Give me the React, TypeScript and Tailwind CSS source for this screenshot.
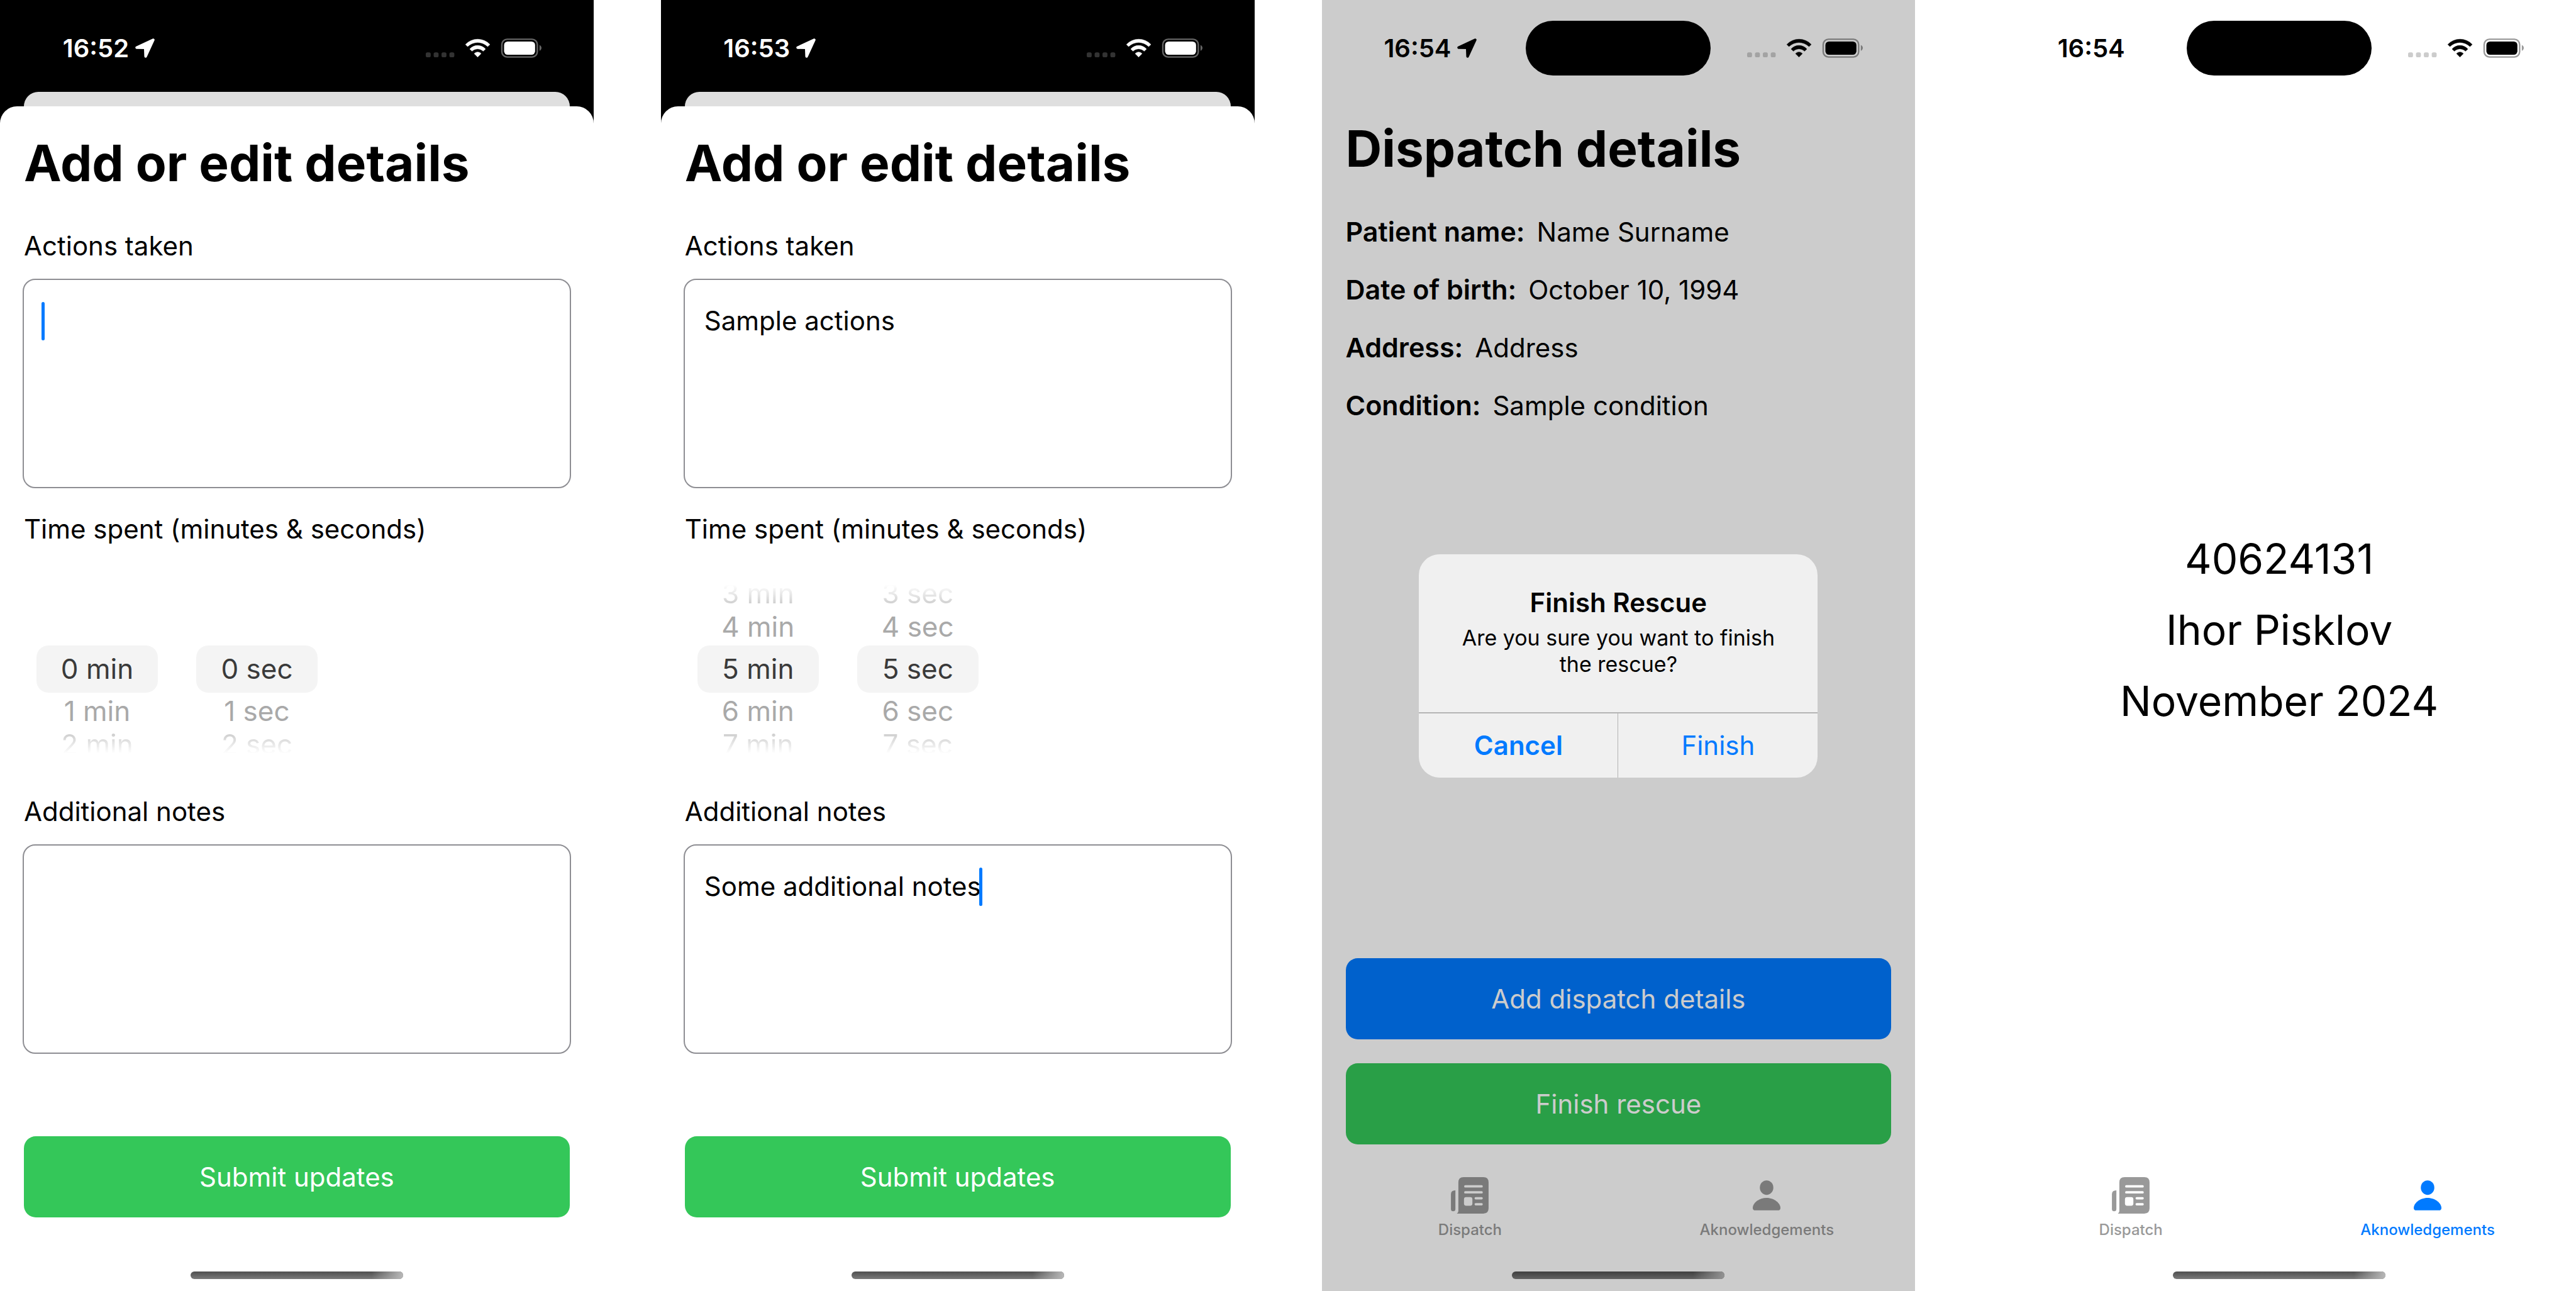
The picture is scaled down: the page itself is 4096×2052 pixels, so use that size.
import React, { useState } from "react";

function StatusGlyphs({ dark }: { dark: boolean }) {
  const ink = dark ? "#fff" : "#000";
  const edge = dark ? "#666" : "#999";
  const faint = dark ? "#333" : "#ccc";
  return (
    <svg viewBox="135 84 705 117" className="h-[31px] w-[184px]" role="img" aria-label="No signal, Wi-Fi on, battery full">
      {[135, 183, 231, 279].map((x) => (
        <rect key={x} x={x} y="168" width="30" height="30" rx="10" fill={faint} />
      ))}
      <g fill={ink} stroke={ink} strokeWidth="2" strokeLinejoin="round">
        <path d="M377 120A103 103 0 0 1 526 120L512 133A87 87 0 0 0 390 133Z" />
        <path d="M403 148A64 64 0 0 1 499 148L485 161A48 48 0 0 0 417 161Z" />
        <path d="M430 176A27 27 0 0 1 472 176L451 197Z" />
      </g>
      <rect x="598.500" y="88.500" width="216" height="108" rx="32" fill="none" stroke={edge} strokeWidth="9" />
      <rect x="612" y="102" width="189" height="81" rx="22" fill={ink} />
      <path d="M828 123C836 127 840 134 840 141S836 156 828 159Z" fill={edge} />
    </svg>
  );
}

function LocationArrow() {
  return (
    <svg viewBox="519 86 118 118" className="size-[31px]" aria-hidden="true">
      <path
        d="M628 95L528 142L580 143L582 195Z"
        fill="currentColor"
        stroke="currentColor"
        strokeWidth="16"
        strokeLinejoin="round"
      />
    </svg>
  );
}

function StatusBar({ time, dark = false, location = true, island = false }: { time: string; dark?: boolean; location?: boolean; island?: boolean }) {
  return (
    <header
      className={`grid h-[146px] shrink-0 grid-cols-[1fr_294px_1fr] items-center pt-[7px] ${dark ? "text-white" : "text-black"}`}
    >
      <div className="flex items-center justify-center gap-[10px] pl-[21px]">
        <span className="text-[40px] leading-[48px] font-semibold">{time}</span>
        {location && <LocationArrow />}
      </div>
      <div className="h-[87px]">{island && <div className="h-full rounded-full bg-black" />}</div>
      <div className="flex justify-center pr-[25px]">
        <StatusGlyphs dark={dark} />
      </div>
    </header>
  );
}

function HomeIndicator() {
  return (
    <div className="mx-auto mt-auto mb-[19px] h-[12px] w-[338px] shrink-0 overflow-hidden rounded-full bg-linear-to-b from-[#4f4f4f] to-[#7b7b7b]">
      <div className="ml-auto h-full w-[50px] bg-linear-to-r from-transparent to-[#b8b8b8]" />
    </div>
  );
}

function Title({ children }: { children: React.ReactNode }) {
  return <h1 className="mb-[57px] text-[80px] leading-[96px] font-bold">{children}</h1>;
}

function WideButton({ tone, children }: { tone: "green" | "blue"; children: React.ReactNode }) {
  return (
    <button
      type="button"
      className={`h-[129px] w-full shrink-0 rounded-[19px] text-[42px] leading-[54px] text-white ${tone === "green" ? "bg-[#34c759]" : "bg-[#007aff]"}`}
    >
      {children}
    </button>
  );
}

function Field({ id, label, initial, caret }: { id: string; label: string; initial: string; caret?: string }) {
  const [value, setValue] = useState(initial);
  return (
    <div className="relative flex flex-col gap-[25px]">
      <label htmlFor={id} className="text-[42px] leading-[54px]">
        {label}
      </label>
      <textarea
        id={id}
        value={value}
        onChange={(e) => setValue(e.target.value)}
        className="-mx-[2px] h-[333px] resize-none rounded-[20px] border-2 border-[#8e8e93] bg-white px-[31px] py-[38px] text-[42px] leading-[54px] outline-none"
      />
      {caret !== undefined && <span aria-hidden="true" className={`absolute top-[116px] h-[61px] w-[5px] rounded-full bg-[#007aff] ${caret}`} />}
    </div>
  );
}

const rowStyles: Record<number, string> = {
  [-2]: "h-[47px] text-[#cfcfcf] [mask-image:linear-gradient(to_top,black_15%,transparent_80%)]",
  [-1]: "h-[59px] text-[#a9a9a9]",
  0: "h-[75px] w-full rounded-[19px] bg-[#f4f4f4] text-[#3a3a3a]",
  1: "h-[59px] text-[#a9a9a9]",
  2: "h-[47px] text-[#cfcfcf] [mask-image:linear-gradient(to_bottom,black_15%,transparent_80%)]",
};

function Wheel({ value, unit, label }: { value: number; unit: string; label: string }) {
  return (
    <ul role="listbox" aria-label={label} className="flex w-[193px] flex-col items-center text-[44px] leading-[54px]">
      {[-2, -1, 0, 1, 2].map((step) => (
        <li
          key={step}
          role="option"
          aria-selected={step === 0}
          className={`flex items-center justify-center whitespace-nowrap ${rowStyles[step]}`}
        >
          {value + step >= 0 ? `${value + step} ${unit}` : ""}
        </li>
      ))}
    </ul>
  );
}

function DetailsForm({ id, time, actions, notes, spent, actionsCaret, notesCaret }: {
  id: string;
  time: string;
  actions: string;
  notes: string;
  spent: number;
  actionsCaret?: string;
  notesCaret?: string;
}) {
  return (
    <section className="flex min-h-screen flex-col bg-black">
      <StatusBar time={time} dark />
      <div className="mx-[38px] h-[23px] shrink-0 rounded-t-[23px] bg-[#dfdfdf]" />
      <form className="flex flex-1 flex-col rounded-t-[27px] bg-white px-[38px] pt-[42px]">
        <Title>Add or edit details</Title>
        <div className="flex flex-col gap-[38px]">
          <Field id={`${id}-actions`} label="Actions taken" initial={actions} caret={actionsCaret} />
          <div className="flex flex-col gap-[25px]">
            <span className="text-[42px] leading-[54px]">Time spent (minutes &amp; seconds)</span>
            <div className="ml-[20px] flex h-[332px] items-center gap-[61px] pt-[8px]">
              <Wheel value={spent} unit="min" label="Minutes" />
              <Wheel value={spent} unit="sec" label="Seconds" />
            </div>
          </div>
          <Field id={`${id}-notes`} label="Additional notes" initial={notes} caret={notesCaret} />
        </div>
        <div className="mt-auto flex h-[246px] flex-col">
          <WideButton tone="green">Submit updates</WideButton>
          <HomeIndicator />
        </div>
      </form>
    </section>
  );
}

function NewspaperIcon() {
  return (
    <svg viewBox="144 97 228 221" className="h-[58px] w-[60px]" aria-hidden="true">
      <path
        fill="currentColor"
        fillRule="evenodd"
        d="M189 129Q189 97 221 97H340Q372 97 372 129V286Q372 318 340 318H180Q189 314 189 302ZM231 146a7 7 0 0 0 0 14H330a7 7 0 0 0 0 -14ZM231 182a7 7 0 0 0 0 14H330a7 7 0 0 0 0 -14ZM236 218Q223 218 223 231V257Q223 270 236 270H261Q274 270 274 257V231Q274 218 261 218ZM294 218a7 7 0 0 0 0 14H330a7 7 0 0 0 0 -14ZM294 254a7 7 0 0 0 0 14H330a7 7 0 0 0 0 -14Z"
      />
      <path fill="currentColor" d="M171 177V290A13.500 13.500 0 0 1 144 290V201Q144 177 171 177Z" />
    </svg>
  );
}

function PersonIcon() {
  return (
    <svg viewBox="0 0 170 184" className="h-[48px] w-[44px]" aria-hidden="true">
      <ellipse cx="85" cy="44.500" rx="41.500" ry="44.500" fill="currentColor" />
      <path fill="currentColor" d="M85 107C135 107 170 142 170 169Q170 184 154 184H16Q0 184 0 169C0 142 35 107 85 107Z" />
    </svg>
  );
}

function TabBar({ active }: { active?: string }) {
  const tabs = [
    { name: "Dispatch", icon: <NewspaperIcon /> },
    { name: "Aknowledgements", icon: <PersonIcon /> },
  ];
  return (
    <nav className="flex h-[195px] shrink-0 flex-col pt-[14px]">
      <div className="grid grid-cols-2">
        {tabs.map((tab) => (
          <button
            key={tab.name}
            type="button"
            className={`flex flex-col items-center gap-[11px] text-[24px] leading-[30px] font-medium ${tab.name === active ? "text-[#007aff]" : "text-[#999999]"}`}
          >
            <span className="flex h-[58px] items-center">{tab.icon}</span>
            {tab.name}
          </button>
        ))}
      </div>
      <HomeIndicator />
    </nav>
  );
}

const patient = [
  ["Patient name:", "Name Surname"],
  ["Date of birth:", "October 10, 1994"],
  ["Address:", "Address"],
  ["Condition:", "Sample condition"],
];

function DispatchScreen() {
  return (
    <section className="relative flex min-h-screen flex-col bg-white">
      <StatusBar time="16:54" island />
      <div className="flex flex-1 flex-col px-[38px] pt-[42px] pb-[38px]">
        <Title>Dispatch details</Title>
        <dl className="flex flex-col gap-[37px] leading-[54px]">
          {patient.map(([term, detail]) => (
            <div key={term} className="flex items-baseline gap-[19px]">
              <dt className="text-[43px] font-semibold">{term}</dt>
              <dd className="text-[42px]">{detail}</dd>
            </div>
          ))}
        </dl>
        <div className="mt-auto flex flex-col gap-[38px]">
          <WideButton tone="blue">Add dispatch details</WideButton>
          <WideButton tone="green">Finish rescue</WideButton>
        </div>
      </div>
      <TabBar />
      <div className="absolute inset-0 flex items-center justify-center bg-black/20 pt-[145px] pb-[80px]">
        <div role="alertdialog" aria-labelledby="finish-title" aria-describedby="finish-text" className="w-[634px] overflow-hidden rounded-[33px] bg-[#f0f0f0] text-center">
          <div className="flex flex-col items-center px-[38px] pt-[50px] pb-[55px]">
            <h2 id="finish-title" className="text-[42px] leading-[54px] font-semibold">
              Finish Rescue
            </h2>
            <p id="finish-text" className="mt-[8px] w-[520px] text-[34px] leading-[42px]">
              Are you sure you want to finish the rescue?
            </p>
          </div>
          <div className="grid grid-cols-2 border-t-2 border-[#b4b4b4] text-[42px] leading-[54px] text-[#007aff]">
            <button type="button" className="h-[102px] border-r border-[#b4b4b4] font-semibold">
              Cancel
            </button>
            <button type="button" className="h-[102px]">
              Finish
            </button>
          </div>
        </div>
      </div>
    </section>
  );
}

function AboutScreen() {
  return (
    <section className="flex min-h-screen flex-col bg-white">
      <StatusBar time="16:54" location={false} island />
      <div className="flex flex-1 flex-col items-center justify-center gap-[34px] text-[66px] leading-[79px]">
        <p>40624131</p>
        <p>Ihor Pisklov</p>
        <p>November 2024</p>
      </div>
      <TabBar active="Aknowledgements" />
    </section>
  );
}

export default function App() {
  return (
    <main className="grid min-h-screen grid-cols-4 gap-[107px] bg-white font-['Inter',sans-serif] text-black">
      <DetailsForm id="blank" time="16:52" actions="" notes="" spent={0} actionsCaret="left-[28px]" />
      <DetailsForm id="filled" time="16:53" actions="Sample actions" notes="Some additional notes" spent={5} notesCaret="left-[468px]" />
      <DispatchScreen />
      <AboutScreen />
    </main>
  );
}
